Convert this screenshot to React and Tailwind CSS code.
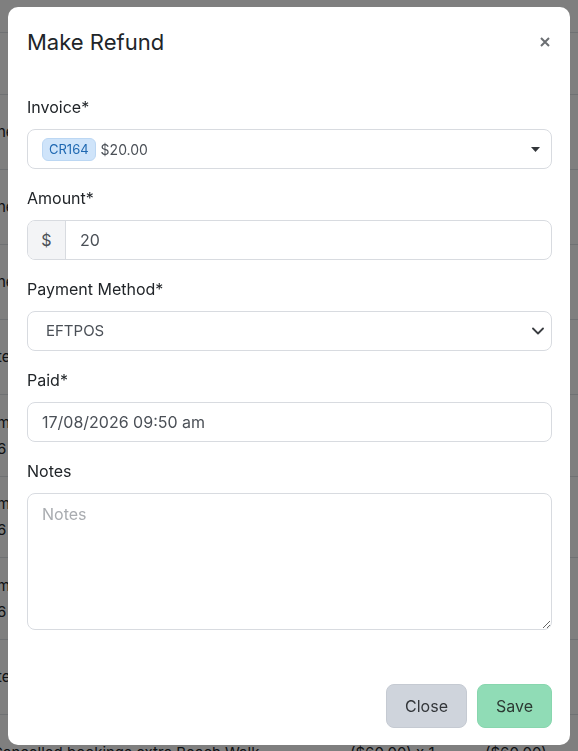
import { useState } from "react";

const rows = [
  { h: 62, a: "", b: "" },
  { h: 75, a: "ne", b: "" },
  { h: 75, a: "ne", b: "" },
  { h: 75, a: "ne", b: "" },
  { h: 75, a: "te", b: "" },
  { h: 82, a: "m", b: "6" },
  { h: 81, a: "m", b: "6" },
  { h: 82, a: "m", b: "6" },
  { h: 75, a: "te", b: "" },
];

function Backdrop() {
  return (
    <div className="h-screen overflow-hidden bg-white font-['Inter',sans-serif] text-[15px] text-[#212529]">
      <div className="h-[33px] border-b border-[#dee2e6]" />
      {rows.map((r, i) => (
        <div key={i} className="flex flex-col justify-center border-b border-[#dee2e6] -ml-[3px] leading-[26px]" style={{ height: r.h }}>
          <span>{r.a}</span>
          {r.b && <span>{r.b}</span>}
        </div>
      ))}
      <div className="flex pt-[28px] -ml-[8px] leading-[20px]">
        <span className="w-[358px]">Cancelled bookings extra Beach Walk</span>
        <span className="w-[135px]">($60.00) x 1</span>
        <span>($60.00)</span>
      </div>
    </div>
  );
}

function Label({ children }) {
  return <label className="block text-[16px] leading-6 text-[#212529] mb-[10px]">{children}</label>;
}

export default function App() {
  const [amount, setAmount] = useState("20");
  return (
    <div className="relative">
      <Backdrop />
      <div className="fixed inset-0 bg-black/50 pt-[7px] pl-[8px] font-['Inter',sans-serif]">
        <div className="w-[562px] h-[738px] rounded-[10px] bg-white flex flex-col">
          <div className="flex items-center justify-between pl-[19px] pr-[20px] pt-[20px] h-[68px] pb-[20px]">
            <h2 className="text-[22px] leading-7 text-[#212529] mt-[1px]">Make Refund</h2>
            <svg width="10" height="10" viewBox="0 0 10 10" className="mt-[1px]">
              <path d="M1 1 9 9M9 1 1 9" stroke="#6c6f73" strokeWidth="2" />
            </svg>
          </div>

          <div className="pl-[19px] pr-[18px] pt-[20px] flex-1 flex flex-col">
            <Label>Invoice*</Label>
            <div className="h-[40px] rounded-lg border border-[#d8dbe0] flex items-center pl-[14px] pr-[10px] mb-[17px]">
              <span className="rounded-md bg-[#cfe4fa] border border-[#bcd7f3] text-[#1f68b1] text-[13px] leading-[21px] px-[6px]">CR164</span>
              <span className="ml-[5px] text-[14px] text-[#4b5057]">$20.00</span>
              <svg width="9" height="5" viewBox="0 0 9 5" className="ml-auto mr-[1px]">
                <path d="M0 0h9L4.5 5z" fill="#33363a" />
              </svg>
            </div>

            <Label>Amount*</Label>
            <div className="h-[40px] rounded-lg border border-[#d8dbe0] flex mb-[17px] overflow-hidden">
              <span className="w-[38px] bg-[#f3f4f6] border-r border-[#d8dbe0] flex items-center justify-center text-[16px] text-[#4b5057]">$</span>
              <input
                value={amount}
                onChange={(e) => setAmount(e.target.value)}
                className="flex-1 pl-[14px] text-[16px] text-[#4b5057] outline-none bg-transparent"
              />
            </div>

            <Label>Payment Method*</Label>
            <div className="h-[40px] rounded-lg border border-[#d8dbe0] flex items-center pl-[18px] pr-[6px] mb-[17px]">
              <span className="text-[15px] text-[#4b5057]">EFTPOS</span>
              <svg width="14" height="10" viewBox="0 0 16 12" className="ml-auto">
                <path d="m2 3 6 6 6-6" fill="none" stroke="#3a3d41" strokeWidth="2.2" strokeLinecap="round" strokeLinejoin="round" />
              </svg>
            </div>

            <Label>Paid*</Label>
            <div className="h-[40px] rounded-lg border border-[#d8dbe0] flex items-center pl-[14px] mb-[17px]">
              <span className="text-[16px] text-[#4b5057]">17/08/2026 09:50 am</span>
            </div>

            <Label>Notes</Label>
            <textarea
              placeholder="Notes"
              className="h-[137px] w-full rounded-lg border border-[#d8dbe0] px-[14px] py-[8px] text-[16px] text-[#4b5057] placeholder:text-[#a9acb0] outline-none"
            />

            <div className="flex justify-end gap-[10px] mt-[54px]">
              <button className="h-[44px] w-[81px] rounded-lg bg-[#cfd4dc] border border-[#c5cad2] text-[16px] text-[#33363a]">Close</button>
              <button className="h-[44px] w-[75px] rounded-lg bg-[#90dcb6] border border-[#88d6ae] text-[16px] text-[#2c3a33]">Save</button>
            </div>
          </div>
        </div>
      </div>
    </div>
  );
}
